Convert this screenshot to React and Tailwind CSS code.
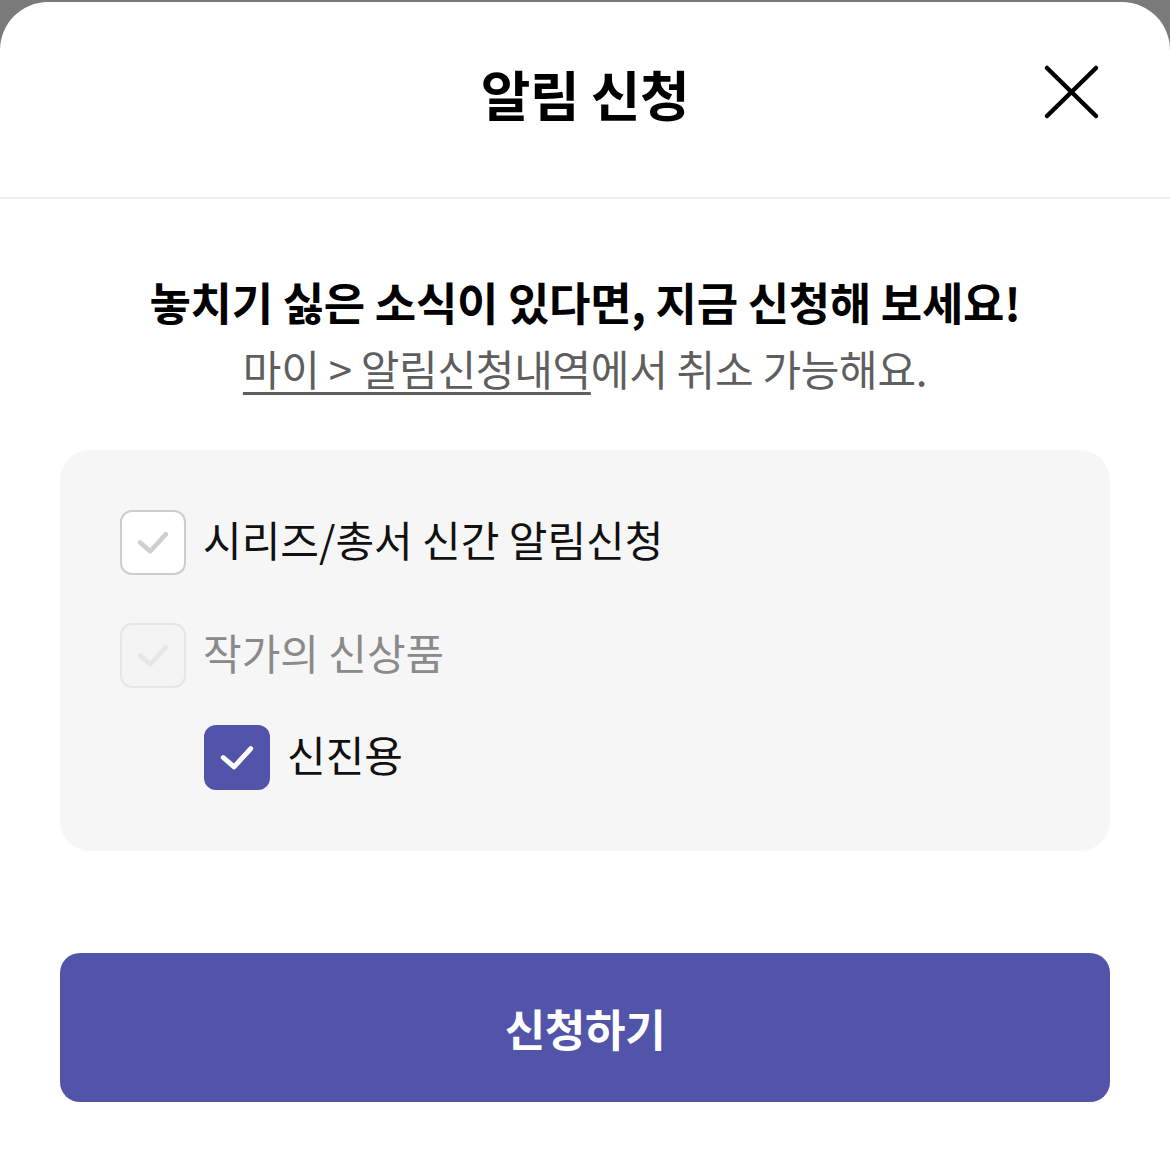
import React from "react";

const FONT = { fontFamily: '"Noto Sans CJK KR", "Noto Sans", sans-serif' };

function Check({ color }) {
  return (
    <svg viewBox="0 0 66 66" className="w-full h-full">
      <path d="M19 33 L30 42.5 L47 24" fill="none" stroke={color} strokeWidth="5" strokeLinecap="round" strokeLinejoin="round" />
    </svg>
  );
}

function Row({ box, label }) {
  return (
    <div className="flex items-center">
      {box}
      <span className="ml-[17px] mt-[-8px]">{label}</span>
    </div>
  );
}

export default function App() {
  return (
    <div className="w-[1170px] h-[1163px] bg-[#7a7a7a] pt-[2px] overflow-hidden" style={FONT}>
      <div className="w-full h-[1161px] bg-white rounded-t-[48px] flex flex-col">
        {/* header */}
        <div className="relative h-[195px] flex items-center justify-center">
          <h1 className="text-[54px] font-bold leading-none text-black tracking-[-0.5px] mt-[-12px]">알림 신청</h1>
          <button className="absolute left-[1042px] top-[61px] w-[60px] h-[60px]">
            <svg viewBox="0 0 60 60" className="w-full h-full">
              <path d="M5 5 L54 53 M54 5 L5 53" stroke="#000" strokeWidth="4.5" strokeLinecap="round" fill="none" />
            </svg>
          </button>
        </div>
        <div className="h-[2px] bg-[#eeeeee]" />

        {/* intro */}
        <div className="mt-[78px] h-[50px] flex items-center justify-center">
          <p className="text-[45px] font-semibold leading-none text-black tracking-[-0.3px] mt-[-2px]">놓치기 싫은 소식이 있다면, 지금 신청해 보세요!</p>
        </div>
        <div className="mt-[21px] h-[50px] flex items-center justify-center">
          <p className="text-[42px] leading-none text-[#5e5e5e] tracking-[-0.3px] mt-[-10px]">
            <span className="underline underline-offset-[6px] decoration-[3px] [text-decoration-skip-ink:none]">마이 &gt; 알림신청내역</span>에서 취소 가능해요.
          </p>
        </div>

        {/* options */}
        <div className="mx-[60px] mt-[52px] bg-[#f6f6f6] rounded-[30px] pt-[60px] pb-[61px] px-[60px] flex flex-col text-[42px] leading-none">
          <Row
            box={
              <div className="w-[66px] h-[65px] rounded-[12px] border-2 border-[#cdcdcd] bg-white shrink-0">
                <Check color="#cfcfcf" />
              </div>
            }
            label={<span className="text-[#111111]">시리즈/총서 신간 알림신청</span>}
          />
          <div className="mt-[48px]">
            <Row
              box={
                <div className="w-[66px] h-[65px] rounded-[12px] border-2 border-[#e6e6e6] bg-[#f4f4f4] shrink-0">
                  <Check color="#e6e6e6" />
                </div>
              }
              label={<span className="text-[#8a8a8a]">작가의 신상품</span>}
            />
          </div>
          <div className="mt-[37px] ml-[84px]">
            <Row
              box={
                <div className="w-[66px] h-[65px] rounded-[12px] bg-[#5254aa] shrink-0">
                  <Check color="#ffffff" />
                </div>
              }
              label={<span className="text-[#111111]">신진용</span>}
            />
          </div>
        </div>

        {/* submit */}
        <button className="mx-[60px] mt-[102px] h-[149px] rounded-[20px] bg-[#5254aa] flex items-center justify-center">
          <span className="text-[44px] font-bold text-white leading-none tracking-[-0.3px]">신청하기</span>
        </button>
      </div>
    </div>
  );
}
